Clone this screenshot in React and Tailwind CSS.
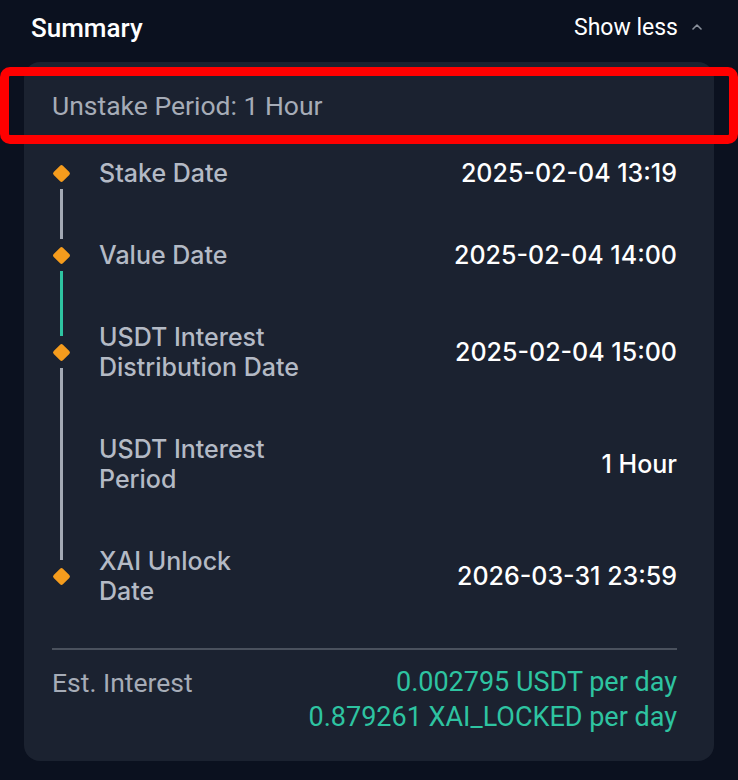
import React from 'react';

const rows = [
  { label: ['Stake Date'], value: '2025-02-04 13:19', top: 'none', bottom: 'gray', dot: true },
  { label: ['Value Date'], value: '2025-02-04 14:00', top: 'gray', bottom: 'teal', dot: true },
  { label: ['USDT Interest', 'Distribution Date'], value: '2025-02-04 15:00', top: 'teal', bottom: 'gray', dot: true },
  { label: ['USDT Interest', 'Period'], value: '1 Hour', top: 'gray', bottom: 'gray', dot: false },
  { label: ['XAI Unlock', 'Date'], value: '2026-03-31 23:59', top: 'gray', bottom: 'none', dot: true },
];

const segColor = {
  none: 'bg-transparent',
  gray: 'bg-[#a3a9b4]',
  teal: 'bg-[#2ec4a1]',
};

const Rail = ({ top, bottom, dot }) => {
  if (!dot) {
    return (
      <div className="flex w-[18px] shrink-0 justify-center">
        <div className={`w-[3px] ${segColor[top]}`} />
      </div>
    );
  }
  return (
    <div className="flex w-[18px] shrink-0 flex-col items-center">
      <div className={`mb-[7px] w-[3px] flex-1 ${segColor[top]}`} />
      <div className="flex h-[18px] w-[18px] items-center justify-center">
        <div className="h-[13px] w-[13px] rotate-45 rounded-[2px] bg-[#f59c1d]" />
      </div>
      <div className={`mt-[7px] w-[3px] flex-1 ${segColor[bottom]}`} />
    </div>
  );
};

export default function App() {
  return (
    <div className="relative min-h-[780px] w-[738px] bg-[#0b111f] pt-[12px] font-['Roboto',sans-serif]">
      {/* Header */}
      <div className="flex items-center justify-between pl-[31px] pr-[36px]">
        <h2 className="text-[26px] font-medium leading-[32px] text-white">Summary</h2>
        <button className="flex items-center gap-[14px] text-[23px] leading-[32px] text-white">
          Show less
          <svg width="10" height="7" viewBox="0 0 10 7" fill="none" className="mt-[-4px]">
            <path d="M1 6l4-4 4 4" stroke="#8a909b" strokeWidth="1.6" strokeLinecap="round" strokeLinejoin="round" />
          </svg>
        </button>
      </div>

      {/* Card */}
      <div className="ml-[24px] mt-[18px] w-[690px] rounded-[16px] bg-[#1b2230] pb-[26px] pl-[28px] pr-[37px] pt-[30px]">
        <div className="text-[26.5px] leading-[28px] text-[#a6acb7]">Unstake Period: 1 Hour</div>

        <div className="mt-[12px] flex flex-col font-['Inter',sans-serif]">
          {rows.map((row) => (
            <div key={row.value + row.label[0]} className="flex items-stretch">
              <Rail top={row.top} bottom={row.bottom} dot={row.dot} />
              <div className="flex flex-1 items-center justify-between py-[26px] pl-[29px]">
                <div className="text-[25px] font-medium leading-[30px] text-[#b4bac5]">
                  {row.label.map((l) => (
                    <div key={l}>{l}</div>
                  ))}
                </div>
                <div className="text-[25px] font-medium leading-[30px] text-white">{row.value}</div>
              </div>
            </div>
          ))}
        </div>

        <div className="mt-[16px] h-[2px] bg-[#4a515d]" />

        <div className="mt-[15px] flex justify-between text-[27px] leading-[35px]">
          <div className="text-[26.5px] text-[#a6acb7]">Est. Interest</div>
          <div className="text-right text-[#2ec4a1]">
            <div>0.002795 USDT per day</div>
            <div>0.879261 XAI_LOCKED per day</div>
          </div>
        </div>
      </div>

      {/* Highlight frame */}
      <div className="pointer-events-none absolute left-0 top-[67px] h-[77px] w-[738px] rounded-[10px] border-[9px] border-[#ff0000]" />
    </div>
  );
}
